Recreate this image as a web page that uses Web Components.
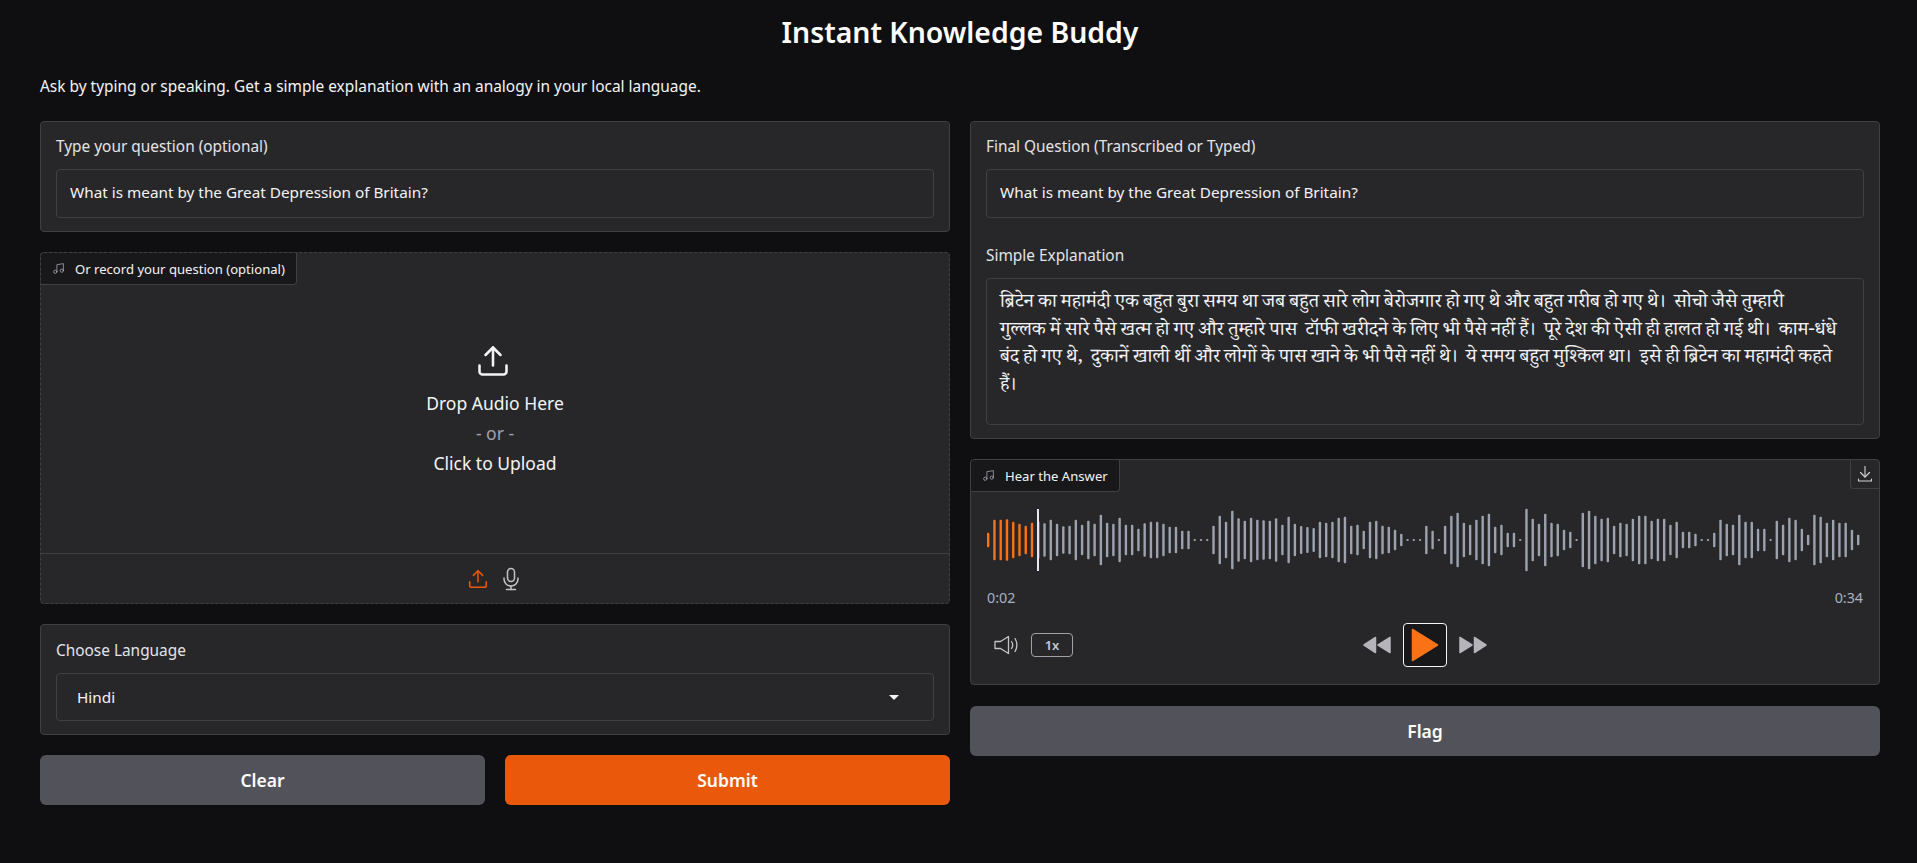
<!DOCTYPE html>
<html lang="en">
<head>
<meta charset="utf-8">
<title>Instant Knowledge Buddy</title>
<style>
    html, body { margin: 0; background: #0f0f11; }
    body { font-family: "Noto Sans", sans-serif; color: #f4f4f5; }
</style>
</head>
<body>
<kb-app></kb-app>

<script>
const ICONS = {
    music: '<svg viewBox="0 0 24 24" fill="none" stroke="currentColor" stroke-width="1.5" stroke-linecap="round" stroke-linejoin="round"><path d="M9 18V5l12-2v13"/><circle cx="6" cy="18" r="3"/><circle cx="18" cy="16" r="3"/></svg>',
    upload: '<svg viewBox="0 0 24 24" fill="none" stroke="currentColor" stroke-width="1.700" stroke-linecap="round" stroke-linejoin="round"><path d="M21 15v4a2 2 0 0 1-2 2H5a2 2 0 0 1-2-2v-4"/><polyline points="17 8 12 3 7 8"/><line x1="12" y1="3" x2="12" y2="15"/></svg>',
    mic: '<svg viewBox="0 0 24 24" fill="none" stroke="currentColor" stroke-width="1.5" stroke-linecap="round" stroke-linejoin="round"><rect x="8.5" y="1.5" width="7" height="13" rx="3.5"/><path d="M19 11v1a7 7 0 0 1-14 0v-1"/><line x1="12" y1="19" x2="12" y2="22.5"/><line x1="7.5" y1="22.5" x2="16.5" y2="22.5"/></svg>',
    download: '<svg viewBox="0 0 16 16" fill="none" stroke="currentColor" stroke-width="1.1" stroke-linecap="round" stroke-linejoin="round"><path d="M8 .5v10.500"/><path d="M3.5 6.5L8 11l4.500-4.500"/><path d="M1.500 13v2h13v-2"/></svg>',
    volume: '<svg viewBox="0 0 26 20" fill="none" stroke="currentColor" stroke-width="1.3" stroke-linecap="round" stroke-linejoin="round"><path d="M1 6.500h5.500L14.500 1.500v17L6.500 13.500H1z"/><path d="M17.500 6.500c1.400 2 1.400 5 0 7"/><path d="M21 3.500c2.500 3.800 2.500 9.200 0 13"/></svg>',
    back: '<svg viewBox="0 0 28 18" fill="currentColor" stroke="currentColor" stroke-width="1.500" stroke-linejoin="round"><path d="M1 9L12.500 1.500v15z"/><path d="M15 9L27 1.500v15z"/></svg>',
    forward: '<svg viewBox="0 0 28 18" fill="currentColor" stroke="currentColor" stroke-width="1.500" stroke-linejoin="round"><path d="M27 9L15.500 1.500v15z"/><path d="M13 9L1 1.500v15z"/></svg>'
};

// Waveform heights read off the reference, in px * 3
const WAVE = [44,122,122,124,110,98,86,104,112,100,122,98,82,86,122,92,116,98,152,104,98,134,92,92,68,100,110,110,98,80,80,56,56,6,6,6,86,146,110,176,130,116,134,122,118,116,130,92,140,98,84,78,72,110,104,110,134,140,86,92,56,110,116,86,80,62,38,6,6,6,86,56,6,86,146,164,104,92,122,146,158,80,92,44,44,6,188,128,98,158,104,98,62,50,6,164,176,146,128,134,86,104,98,128,146,146,116,128,128,92,110,50,50,38,6,6,44,122,98,92,152,110,110,68,68,6,116,92,134,122,68,32,152,140,104,122,104,104,62,32];

class KbBlock extends HTMLElement {
    connectedCallback() {
        this.attachShadow({ mode: 'open' });
        this.shadowRoot.innerHTML = `
            <style>
                :host {
                    display: block;
                    box-sizing: border-box;
                    background: #27272a;
                    border: 1px solid #3f3f46;
                    border-radius: 4px;
                    padding: 15px 15px 13px;
                }
            </style>
            <slot></slot>
        `;
    }
}

class KbField extends HTMLElement {
    connectedCallback() {
        this.attachShadow({ mode: 'open' });
        this.shadowRoot.innerHTML = `
            <style>
                :host { display: block; }
                .label {
                    color: #e4e4e7;
                    font-size: 15.400px;
                    line-height: 18px;
                    margin: 1px 0 13px;
                }
                .box {
                    box-sizing: border-box;
                    background: #27272a;
                    border: 1px solid #3f3f46;
                    border-radius: 4px;
                    padding: 10px 13px;
                    color: #f4f4f5;
                    font-size: 15.300px;
                    line-height: 24.500px;
                    height: var(--box-height, 49px);
                }
            </style>
            <div class="label">${this.getAttribute('label')}</div>
            <div class="box"><slot></slot></div>
        `;
    }
}

class KbSelect extends HTMLElement {
    connectedCallback() {
        this.attachShadow({ mode: 'open' });
        this.shadowRoot.innerHTML = `
            <style>
                :host { display: block; }
                .label {
                    color: #e4e4e7;
                    font-size: 15.400px;
                    line-height: 18px;
                    margin: 2px 0 13px;
                }
                .box {
                    box-sizing: border-box;
                    display: flex;
                    align-items: center;
                    justify-content: space-between;
                    height: 48px;
                    padding: 0 34px 0 20px;
                    border: 1px solid #3f3f46;
                    border-radius: 4px;
                    font-size: 15.300px;
                }
                .arrow {
                    width: 0;
                    height: 0;
                    border-left: 5px solid transparent;
                    border-right: 5px solid transparent;
                    border-top: 5px solid #f4f4f5;
                }
            </style>
            <div class="label">${this.getAttribute('label')}</div>
            <div class="box"><slot></slot><span class="arrow"></span></div>
        `;
    }
}

class KbTab extends HTMLElement {
    connectedCallback() {
        this.attachShadow({ mode: 'open' });
        this.shadowRoot.innerHTML = `
            <style>
                :host {
                    position: absolute;
                    top: 0;
                    left: 0;
                    box-sizing: border-box;
                    display: flex;
                    align-items: center;
                    gap: 10px;
                    height: 32px;
                    padding: 0 11px 0 11px;
                    background: #18181b;
                    border-right: 1px solid #3f3f46;
                    border-bottom: 1px solid #3f3f46;
                    border-radius: 4px 0 4px 0;
                    color: #f4f4f5;
                    font-size: 13.100px;
                }
                svg { width: 13px; height: 13px; color: #a1a1aa; flex: none; }
            </style>
            ${ICONS.music}<slot></slot>
        `;
    }
}

class KbAudioUpload extends HTMLElement {
    connectedCallback() {
        this.attachShadow({ mode: 'open' });
        this.shadowRoot.innerHTML = `
            <style>
                :host {
                    position: relative;
                    display: flex;
                    flex-direction: column;
                    box-sizing: border-box;
                    height: 352px;
                    background: #27272a;
                    border: 1px dashed #3f3f46;
                    border-radius: 4px;
                }
                .drop {
                    flex: 1;
                    display: flex;
                    flex-direction: column;
                    align-items: center;
                    padding-top: 90px;
                    font-size: 17.500px;
                    color: #f4f4f5;
                }
                .drop svg { width: 36px; height: 36px; margin: 0 4px 9px 0; }
                .line { line-height: 30px; }
                .or { color: #a1a1aa; }
                .foot {
                    display: flex;
                    justify-content: center;
                    align-items: center;
                    gap: 10px;
                    height: 50px;
                    border-top: 1px solid #3f3f46;
                    box-sizing: border-box;
                }
                .foot svg { display: block; }
                .on svg { width: 22px; height: 22px; }
                .off svg { width: 24px; height: 24px; }
                .on { color: #ea580c; }
                .off { color: #c4c4c8; }
            </style>
            <kb-tab>${this.getAttribute('label')}</kb-tab>
            <div class="drop">
                ${ICONS.upload}
                <span class="line">Drop Audio Here</span>
                <span class="line or">- or -</span>
                <span class="line">Click to Upload</span>
            </div>
            <div class="foot">
                <span class="on">${ICONS.upload}</span>
                <span class="off">${ICONS.mic}</span>
            </div>
        `;
    }
}

class KbWaveform extends HTMLElement {
    connectedCallback() {
        this.attachShadow({ mode: 'open' });
        const played = Number(this.getAttribute('played'));
        const step = 870 / (WAVE.length - 1);
        const bars = WAVE.map((h, i) => {
            const px = Math.max(h / 3, 1.5);
            const x = i * step;
            const fill = x < played ? '#f97316' : '#9ca3af';
            return `<rect x="${x.toFixed(2)}" y="${(34 - px / 2).toFixed(2)}" width="2.4" height="${px.toFixed(2)}" rx="1" fill="${fill}"/>`;
        }).join('');
        this.shadowRoot.innerHTML = `
            <style>
                :host { display: block; height: 68px; }
                svg { display: block; overflow: visible; }
            </style>
            <svg width="874" height="68" viewBox="0 0 874 68">
                ${bars}
                <rect x="${played}" y="3" width="2" height="62" fill="#e9e5f5"/>
            </svg>
        `;
    }
}

class KbAudioPlayer extends HTMLElement {
    connectedCallback() {
        this.attachShadow({ mode: 'open' });
        this.shadowRoot.innerHTML = `
            <style>
                :host {
                    position: relative;
                    display: block;
                    box-sizing: border-box;
                    height: 226px;
                    background: #27272a;
                    border: 1px solid #3f3f46;
                    border-radius: 4px;
                    padding: 46px 16px 0;
                }
                .download {
                    position: absolute;
                    top: 0;
                    right: 0;
                    box-sizing: border-box;
                    width: 29px;
                    height: 29px;
                    display: grid;
                    place-items: center;
                    border-left: 1px solid #3f3f46;
                    border-bottom: 1px solid #3f3f46;
                    border-radius: 0 4px 0 4px;
                    color: #d4d4d8;
                }
                .download svg { width: 16px; height: 16px; }
                .times {
                    display: flex;
                    justify-content: space-between;
                    margin-top: 14px;
                    color: #a8b2c1;
                    font-size: 14.300px;
                    line-height: 20px;
                }
                .controls {
                    display: grid;
                    grid-template-columns: 1fr auto 1fr;
                    align-items: center;
                    margin-top: 15px;
                }
                .left { display: flex; align-items: center; gap: 11px; padding-left: 7px; }
                .left svg { width: 26px; height: 20px; color: #c4c4c8; display: block; }
                .rate {
                    box-sizing: border-box;
                    width: 42px;
                    height: 24px;
                    display: grid;
                    place-items: center;
                    border: 1px solid #a1a1aa;
                    border-radius: 4px;
                    font-size: 13px;
                    font-weight: 600;
                    color: #c4c8d0;
                }
                .mid { display: flex; align-items: center; gap: 12px; }
                .skip { width: 28px; height: 18px; color: #b4b4ba; }
                .skip svg { display: block; width: 28px; height: 18px; }
                .play {
                    box-sizing: border-box;
                    width: 44px;
                    height: 44px;
                    display: grid;
                    place-items: center;
                    background: #18181b;
                    border: 1.500px solid #f4f4f5;
                    border-radius: 4px;
                }
                .play svg { width: 28px; height: 34px; display: block; }
            </style>
            <kb-tab>${this.getAttribute('label')}</kb-tab>
            <div class="download">${ICONS.download}</div>
            <kb-waveform played="50"></kb-waveform>
            <div class="times"><span>0:02</span><span>0:34</span></div>
            <div class="controls">
                <div class="left">${ICONS.volume}<span class="rate">1x</span></div>
                <div class="mid">
                    <span class="skip">${ICONS.back}</span>
                    <span class="play"><svg viewBox="0 0 28 34"><path d="M1.500 1.500L26.500 17L1.500 32.500z" fill="#f97316" stroke="#f97316" stroke-width="1.500" stroke-linejoin="round"/></svg></span>
                    <span class="skip">${ICONS.forward}</span>
                </div>
                <div></div>
            </div>
        `;
    }
}

class KbButton extends HTMLElement {
    connectedCallback() {
        this.attachShadow({ mode: 'open' });
        const primary = this.hasAttribute('primary');
        this.shadowRoot.innerHTML = `
            <style>
                :host {
                    display: flex;
                    flex: 1;
                    align-items: center;
                    justify-content: center;
                    height: 50px;
                    border-radius: 6px;
                    background: ${primary ? '#ea580c' : '#52525b'};
                    color: #fff;
                    font-size: 17.500px;
                    font-weight: 600;
                }
            </style>
            <slot></slot>
        `;
    }
}

class KbApp extends HTMLElement {
    connectedCallback() {
        this.attachShadow({ mode: 'open' });
        this.shadowRoot.innerHTML = `
            <style>
                :host {
                    display: block;
                    box-sizing: border-box;
                    padding: 0 37px 0 40px;
                    font-family: "Noto Sans", sans-serif;
                    color: #f4f4f5;
                }
                h1 {
                    margin: 0;
                    padding-top: 12px;
                    text-align: center;
                    font-size: 28.400px;
                    line-height: 40px;
                    font-weight: 600;
                    color: #fff;
                }
                p {
                    margin: 24px 0 0;
                    font-size: 15.450px;
                    line-height: 20px;
                }
                .cols {
                    display: grid;
                    grid-template-columns: 1fr 1fr;
                    gap: 20px;
                    margin-top: 25px;
                }
                .col { display: flex; flex-direction: column; gap: 20px; min-width: 0; }
                .row { display: flex; gap: 20px; }
                .answer { --box-height: 147px; margin-top: 29px; }
                .answer-text { font-family: "Noto Serif Devanagari", "Noto Sans Devanagari", "Noto Sans", serif; font-size: 19.600px; word-spacing: -1px; white-space: pre; }
                .flag { flex: none; margin-top: 1px; }
            </style>
            <h1>Instant Knowledge Buddy</h1>
            <p>Ask by typing or speaking. Get a simple explanation with an analogy in your local language.</p>
            <div class="cols">
                <div class="col">
                    <kb-block><kb-field label="Type your question (optional)">What is meant by the Great Depression of Britain?</kb-field></kb-block>
                    <kb-audio-upload label="Or record your question (optional)"></kb-audio-upload>
                    <kb-block><kb-select label="Choose Language">Hindi</kb-select></kb-block>
                    <div class="row">
                        <kb-button>Clear</kb-button>
                        <kb-button primary>Submit</kb-button>
                    </div>
                </div>
                <div class="col">
                    <kb-block>
                        <kb-field label="Final Question (Transcribed or Typed)">What is meant by the Great Depression of Britain?</kb-field>
                        <kb-field class="answer" label="Simple Explanation"><span class="answer-text">ब्रिटेन का महामंदी एक बहुत बुरा समय था जब बहुत सारे लोग बेरोजगार हो गए थे और बहुत गरीब हो गए थे।  सोचो जैसे तुम्हारी<br>गुल्लक में सारे पैसे खत्म हो गए और तुम्हारे पास  टॉफी खरीदने के लिए भी पैसे नहीं हैं।  पूरे देश की ऐसी ही हालत हो गई थी।  काम-धंधे<br>बंद हो गए थे,  दुकानें खाली थीं और लोगों के पास खाने के भी पैसे नहीं थे।  ये समय बहुत मुश्किल था।  इसे ही ब्रिटेन का महामंदी कहते<br>हैं।</span></kb-field>
                    </kb-block>
                    <kb-audio-player label="Hear the Answer"></kb-audio-player>
                    <kb-button class="flag">Flag</kb-button>
                </div>
            </div>
        `;
    }
}

customElements.define('kb-block', KbBlock);
customElements.define('kb-field', KbField);
customElements.define('kb-select', KbSelect);
customElements.define('kb-tab', KbTab);
customElements.define('kb-audio-upload', KbAudioUpload);
customElements.define('kb-waveform', KbWaveform);
customElements.define('kb-audio-player', KbAudioPlayer);
customElements.define('kb-button', KbButton);
customElements.define('kb-app', KbApp);
</script>
</body>
</html>
